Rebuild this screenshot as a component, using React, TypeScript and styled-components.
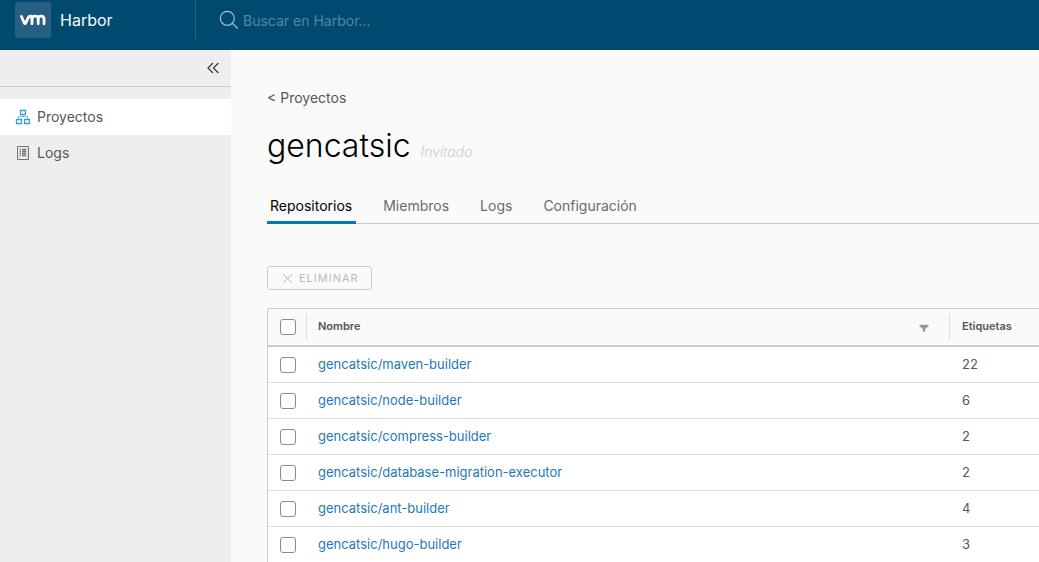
import React from "react";
import styled, { createGlobalStyle } from "styled-components";

const GlobalStyle = createGlobalStyle`
  *, *::before, *::after { box-sizing: border-box; }
  body {
    margin: 0;
    background: #fafafa;
    color: #565656;
    font-family: Inter, "Liberation Sans", sans-serif;
    font-size: 14px;
    line-height: 24px;
  }
  button, input { font: inherit; color: inherit; }
`;

const Shell = styled.div`
  display: flex;
  flex-direction: column;
  height: 100vh;
  overflow: hidden;
`;

const Header = styled.header`
  display: flex;
  flex: none;
  height: 50px;
  padding-bottom: 10px;
  background: #004a70;
`;

const Branding = styled.a`
  display: flex;
  align-items: center;
  gap: 9px;
  width: 196px;
  padding-left: 15px;
  border-right: 1px solid #265f80;
  color: #fafafa;
  font-size: 16px;
  text-decoration: none;
`;

const LogoTile = styled.svg`
  display: block;
  width: 36px;
  height: 36px;
`;

const SearchForm = styled.form`
  display: flex;
  flex: 1;
  align-items: center;
  gap: 4px;
  padding-left: 23px;
`;

const SearchInput = styled.input`
  flex: 1;
  min-width: 0;
  padding: 2px 0 0;
  border: 0;
  outline: 0;
  background: transparent;
  color: #fafafa;
  font-size: 14px;
  &::placeholder { color: #5588a2; opacity: 1; }
`;

const Body = styled.div`
  display: flex;
  flex: 1;
  min-height: 0;
`;

const Sidebar = styled.aside`
  flex: none;
  width: 231px;
  background: #eeeeee;
`;

const CollapseBar = styled.div`
  display: flex;
  align-items: center;
  justify-content: flex-end;
  height: 37px;
  margin-bottom: 12px;
  padding-right: 10px;
  border-bottom: 1px solid #cccccc;
`;

const CollapseButton = styled.button`
  display: flex;
  padding: 0;
  border: 0;
  background: none;
  color: #333333;
`;

const NavItem = styled.a<{ $active?: boolean }>`
  display: flex;
  align-items: center;
  gap: 6px;
  height: 36px;
  padding-left: 15px;
  background: ${(p) => (p.$active ? "#ffffff" : "transparent")};
  color: #565656;
  text-decoration: none;
`;

const Main = styled.main`
  flex: 1;
  min-width: 0;
  padding: 36px 0 0 36px;
  overflow-y: auto;
  scrollbar-width: none;
`;

const BackLink = styled.a`
  display: block;
  width: max-content;
  color: #565656;
  text-decoration: none;
`;

const TitleRow = styled.div`
  display: flex;
  align-items: baseline;
  gap: 10px;
  margin-top: 16px;
`;

const Title = styled.h1`
  margin: 0;
  color: #000000;
  font-size: 32px;
  font-weight: 300;
  line-height: 40px;
`;

const Role = styled.span`
  color: #cccccc;
  font-style: italic;
  font-weight: 300;
`;

const Tabs = styled.nav`
  display: flex;
  gap: 24px;
  height: 36px;
  margin-top: 22px;
  box-shadow: inset 0 -1px 0 #cccccc;
`;

const Tab = styled.button<{ $active?: boolean }>`
  padding: 0 4px 0 3px;
  border: 0;
  background: none;
  box-shadow: ${(p) => (p.$active ? "inset 0 -3px 0 #0079b8" : "none")};
  color: ${(p) => (p.$active ? "#000000" : "#6a6a6a")};
`;

const DeleteButton = styled.button`
  display: flex;
  align-items: center;
  gap: 6px;
  height: 24px;
  margin: 42px 0 18px;
  padding: 0 12px 0 14px;
  border: 1px solid #cccccc;
  border-radius: 3px;
  background: none;
  color: #bbbbbb;
  font-size: 11px;
  letter-spacing: 1px;
  text-transform: uppercase;
`;

const Grid = styled.table`
  width: 100%;
  border: 1px solid #cccccc;
  border-right: 0;
  border-radius: 3px 0 0 0;
  border-spacing: 0;
  table-layout: fixed;
  font-size: 13px;
`;

const HeadCell = styled.th<{ $width?: number }>`
  width: ${(p) => (p.$width ? `${p.$width}px` : "auto")};
  height: 38px;
  padding: 0;
  border-bottom: 2px solid #cccccc;
  font-size: 11px;
  font-weight: 600;
  text-align: left;
`;

const HeadContent = styled.div<{ $inset: number }>`
  display: flex;
  align-items: center;
  justify-content: space-between;
  height: 26px;
  padding: 0 20px 2px ${(p) => p.$inset}px;
  border-left: 1px solid #dddddd;
`;

const FilterButton = styled.button`
  display: flex;
  padding: 4px 0 0;
  border: 0;
  background: none;
`;

const Cell = styled.td`
  height: 36px;
  padding: 0 12px 2px;
  border-bottom: 1px solid #dddddd;
  background: #ffffff;
  &:last-child { padding-left: 13px; }
`;

const RepoLink = styled.a`
  color: #1f78b8;
  text-decoration: none;
`;

const Checkbox = styled.input`
  display: block;
  width: 16px;
  height: 16px;
  margin: 0 0 0 12px;
  appearance: none;
  border: 1px solid #8c8c8c;
  border-radius: 3px;
  background: #ffffff;
  &:checked { background: #0079b8; }
`;

const CheckCell = styled(Cell)`
  padding: 1px 0 0;
`;

const repositories = [
  { name: "gencatsic/maven-builder", tags: 22 },
  { name: "gencatsic/node-builder", tags: 6 },
  { name: "gencatsic/compress-builder", tags: 2 },
  { name: "gencatsic/database-migration-executor", tags: 2 },
  { name: "gencatsic/ant-builder", tags: 4 },
  { name: "gencatsic/hugo-builder", tags: 3 },
];

const tabs = ["Repositorios", "Miembros", "Logs", "Configuración"];

const VmLogo = () => (
  <LogoTile viewBox="0 0 36 36" aria-hidden="true">
    <rect width="36" height="36" rx="3" fill="#265f80" />
    <g fill="none" stroke="#fff" strokeWidth="2.8" strokeLinecap="round" strokeLinejoin="round">
      <path d="M6.400 14.500 L9.200 20.800 Q10 22.400 10.800 20.800 L13.200 15.600 Q13.900 14.200 15.400 14.200 Q17 14.200 17 16.200 V21.800" />
      <path d="M17 17 Q17 14.200 20 14.200 Q23.200 14.200 23.200 17 V21.800 M23.200 17 Q23.200 14.200 26.200 14.200 Q29 14.200 29 17 V21.800" />
    </g>
  </LogoTile>
);

const SearchIcon = () => (
  <svg width="20" height="20" viewBox="0 0 20 20" fill="none" stroke="#a6c0ce" strokeWidth="1.2" strokeLinecap="round" aria-hidden="true">
    <circle cx="8.300" cy="8.300" r="7" />
    <path d="M13.400 13.400 L18.400 18.200" />
  </svg>
);

const CollapseIcon = () => (
  <svg width="16" height="16" viewBox="0 0 16 16" fill="none" stroke="currentColor" strokeWidth="1.2" aria-hidden="true">
    <path d="M8 3 L3 8 L8 13 M13.400 3 L8.400 8 L13.400 13" />
  </svg>
);

const ProjectsIcon = () => (
  <svg width="16" height="16" viewBox="0 0 16 16" fill="none" stroke="#3a9fcb" aria-hidden="true">
    <path d="M5.500 1.500h5v4h-5z M1.500 10.500h5v4h-5z M9.500 10.500h5v4h-5z" strokeWidth="1.300" />
    <path d="M8 5.500V8 M3.500 10V7.500H12.500V10" strokeOpacity=".6" />
  </svg>
);

const LogsIcon = () => (
  <svg width="16" height="16" viewBox="0 0 16 16" fill="none" stroke="#737373" aria-hidden="true">
    <path d="M2.500 1.500h11v13h-11z" />
    <path d="M4.500 3v10 M12 3v10" stroke="#d0d0d0" />
    <path d="M5 4.500h1 M7 4.500h4 M5 6.500h1 M7 6.500h4 M5 8.500h1 M7 8.500h4 M5 10.500h1 M7 10.500h4" strokeWidth="1.300" />
  </svg>
);

const CloseIcon = () => (
  <svg width="11" height="11" viewBox="0 0 11 11" fill="none" stroke="currentColor" aria-hidden="true">
    <path d="M1.200 1.200 L9.800 9.800 M9.800 1.200 L1.200 9.800" />
  </svg>
);

const FilterIcon = () => (
  <svg width="10" height="9" viewBox="0 0 10 9" fill="#999999" aria-hidden="true">
    <path d="M.5 .8h9v1.400L6.200 5v3.200L3.900 7.200V5L.5 2.200z" />
  </svg>
);

export default function App() {
  return (
    <Shell>
      <GlobalStyle />
      <Header>
        <Branding href="#">
          <VmLogo />
          Harbor
        </Branding>
        <SearchForm role="search">
          <SearchIcon />
          <SearchInput type="text" aria-label="Buscar en Harbor" placeholder="Buscar en Harbor..." />
        </SearchForm>
      </Header>
      <Body>
        <Sidebar>
          <CollapseBar>
            <CollapseButton type="button" aria-label="Contraer menú">
              <CollapseIcon />
            </CollapseButton>
          </CollapseBar>
          <nav>
            <NavItem href="#proyectos" $active>
              <ProjectsIcon />
              Proyectos
            </NavItem>
            <NavItem href="#logs">
              <LogsIcon />
              Logs
            </NavItem>
          </nav>
        </Sidebar>
        <Main>
          <BackLink href="#proyectos">&lt; Proyectos</BackLink>
          <TitleRow>
            <Title>gencatsic</Title>
            <Role>Invitado</Role>
          </TitleRow>
          <Tabs>
            {tabs.map((tab, i) => (
              <Tab key={tab} type="button" $active={i === 0}>
                {tab}
              </Tab>
            ))}
          </Tabs>
          <DeleteButton type="button" disabled>
            <CloseIcon />
            Eliminar
          </DeleteButton>
          <Grid>
            <thead>
              <tr>
                <HeadCell $width={38}>
                  <Checkbox type="checkbox" aria-label="Seleccionar todo" />
                </HeadCell>
                <HeadCell>
                  <HeadContent $inset={11}>
                    Nombre
                    <FilterButton type="button" aria-label="Filtrar">
                      <FilterIcon />
                    </FilterButton>
                  </HeadContent>
                </HeadCell>
                <HeadCell $width={90}>
                  <HeadContent $inset={12}>Etiquetas</HeadContent>
                </HeadCell>
              </tr>
            </thead>
            <tbody>
              {repositories.map((repo) => (
                <tr key={repo.name}>
                  <CheckCell>
                    <Checkbox type="checkbox" aria-label={repo.name} />
                  </CheckCell>
                  <Cell>
                    <RepoLink href={`#${repo.name}`}>{repo.name}</RepoLink>
                  </Cell>
                  <Cell>{repo.tags}</Cell>
                </tr>
              ))}
            </tbody>
          </Grid>
        </Main>
      </Body>
    </Shell>
  );
}
